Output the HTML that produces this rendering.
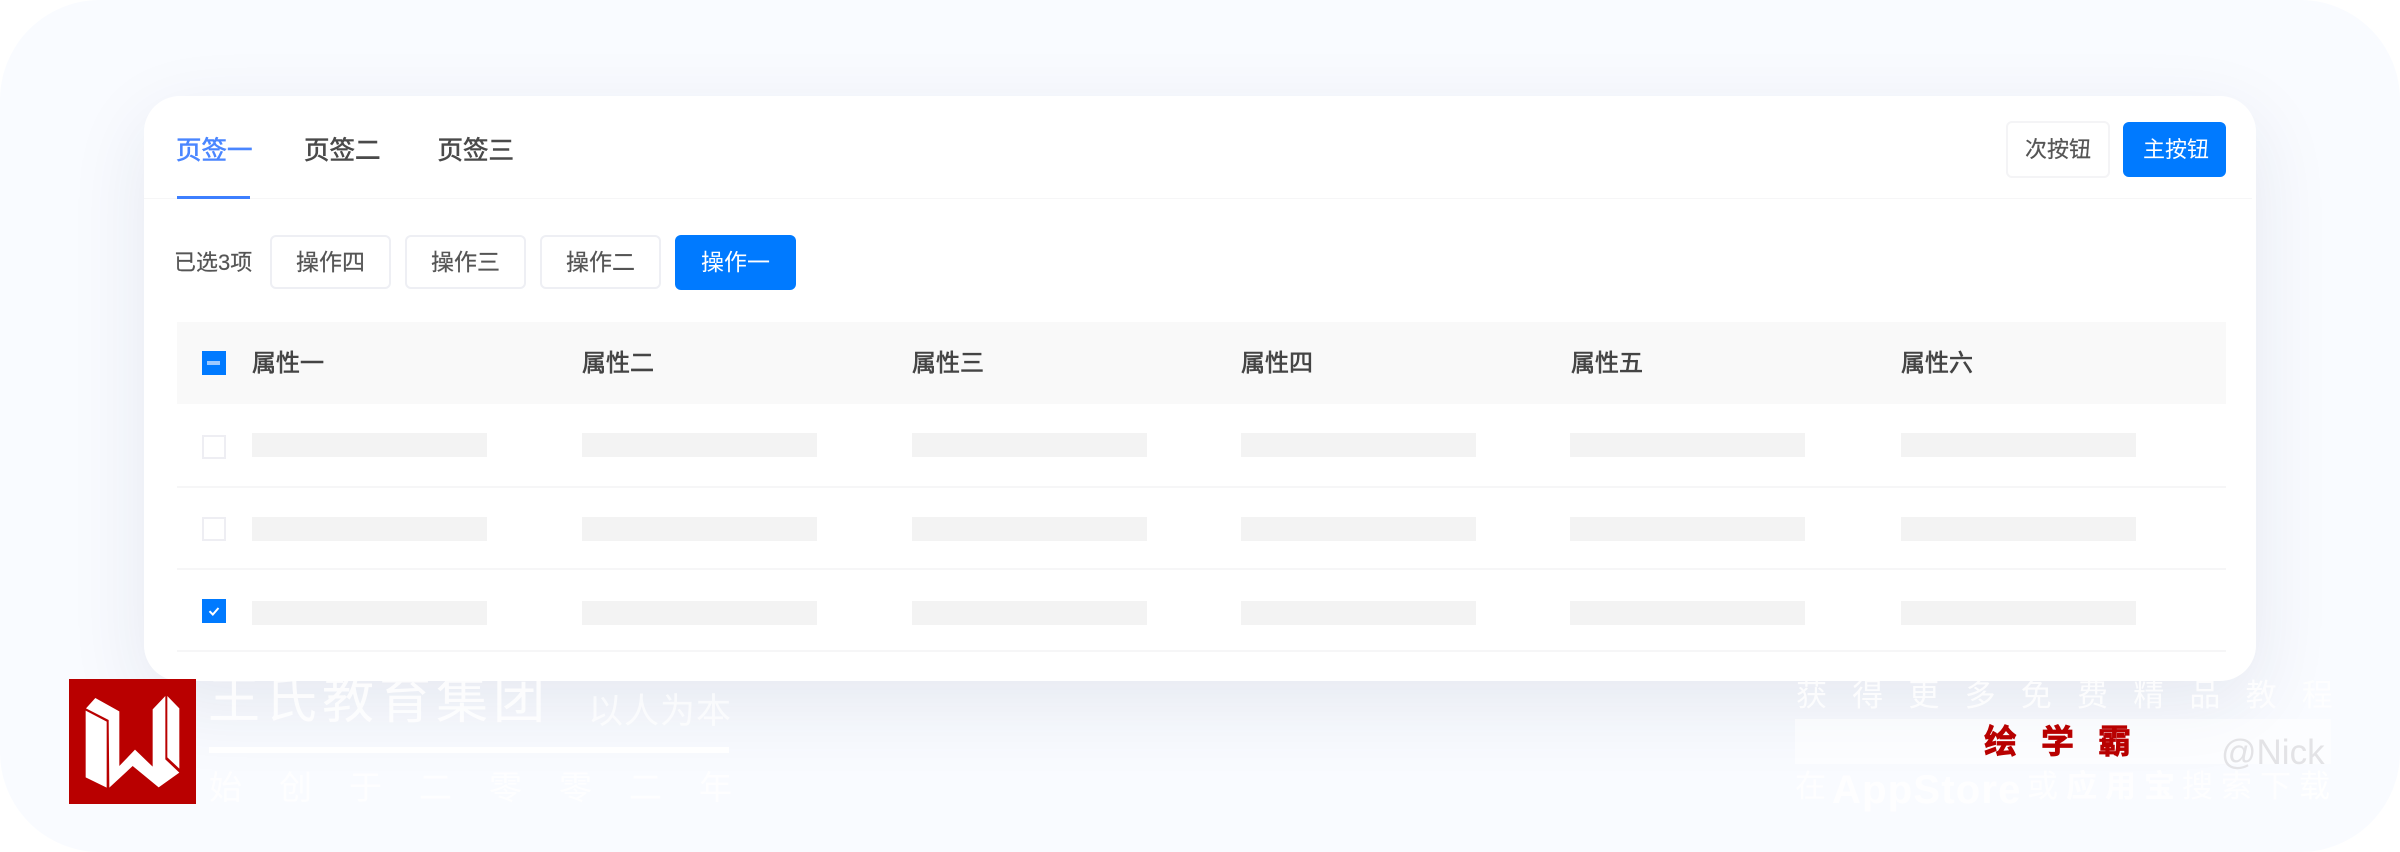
<!DOCTYPE html>
<html lang="zh">
<head>
<meta charset="utf-8">
<style>
html,body{margin:0;padding:0;background:#fff;width:2400px;height:852px;overflow:hidden}
body{font-family:"Liberation Sans","Noto Sans CJK SC",sans-serif}
#bg{position:absolute;left:0;top:0;width:2400px;height:852px;background:#f9fbff;border-radius:100px;overflow:hidden}
.a{position:absolute;white-space:nowrap;line-height:1}
#shadow{position:absolute;left:144px;top:96px;width:2112px;height:585px;border-radius:36px;box-shadow:0 24px 80px rgba(30,40,90,.09)}
#card{position:absolute;left:144px;top:96px;width:2112px;height:585px;background:#fff;border-radius:36px}
.b{position:absolute;box-sizing:border-box}
.btn{position:absolute;box-sizing:border-box;text-align:center;border-radius:6px}
.op{top:235px;width:121px;height:54px;border:2px solid #eeeff4;background:#fff;color:#555;font-size:23px;line-height:50px;-webkit-text-stroke:.2px #555}
.pri{background:#007aff;border:0;color:#fff;-webkit-text-stroke:0}
.sk{position:absolute;width:235px;height:24px;background:#f3f3f3}
.th{position:absolute;top:351px;font-size:24px;line-height:26px;color:#444;-webkit-text-stroke:.6px #444}
.ln{position:absolute;left:177px;width:2049px;height:2px;background:#f6f6f7}
.cb{position:absolute;left:202px;width:24px;height:24px;box-sizing:border-box;border:2px solid #eeeef3;background:#fff}
.cbb{border:0;background:#007aff}
.tab{position:absolute;top:138px;font-size:25.5px;line-height:26px;color:#4a4a4a;-webkit-text-stroke:.6px #4a4a4a}
.w{color:#fff}
</style>
</head>
<body>
<div id="bg">
  <div id="shadow"></div>

  <!-- watermark layer: above the shadow, below the card -->
  <div class="a w" style="left:208px;top:675px;font-size:52px;letter-spacing:5px;opacity:.85">王氏教育集团</div>
  <div class="a w" style="left:588px;top:694px;font-size:35px;letter-spacing:1px;opacity:.7">以人为本</div>
  <div class="b" style="left:209px;top:747px;width:520px;height:6px;background:#fff"></div>
  <div class="a w" style="left:209px;top:771px;font-size:33px;letter-spacing:37px;opacity:.85">始创于二零零二年</div>

  <div class="a w" style="left:1796px;top:680px;font-size:31px;letter-spacing:25.2px;opacity:.85">获得更多免费精品教程</div>
  <div class="b" style="left:1795px;top:719px;width:536px;height:45px;background:rgba(255,255,255,.5)"></div>
  <div class="a" style="left:1984px;top:725px;font-size:33px;letter-spacing:24px;font-weight:bold;color:#b80000;-webkit-text-stroke:.8px #b80000">绘学霸</div>
  <div class="a" style="left:2221px;top:735px;font-size:35px;color:#e3e3e6">@Nick</div>
  <div class="a w" style="left:1795px;top:771px;font-size:31px;opacity:.9">在</div>
  <div class="a w" style="left:1832px;top:770px;font-size:40px;font-weight:bold;letter-spacing:1.2px;opacity:.9">AppStore</div>
  <div class="a w" style="left:2027px;top:771px;font-size:31px;opacity:.9">或</div>
  <div class="a w" style="left:2066px;top:771px;font-size:31px;font-weight:bold;letter-spacing:8px;opacity:.95">应用宝</div>
  <div class="a w" style="left:2182px;top:771px;font-size:31px;letter-spacing:8px;opacity:.9">搜索下载</div>

  <div id="card"></div>

  <!-- logo -->
  <svg class="b" style="left:69px;top:679px" width="127" height="125" viewBox="27 27 381 375">
    <rect x="27" y="27" width="381" height="375" fill="#b90000"/>
    <polygon fill="#fff" points="78,115 106,84 178,124 178,288 225,239 278,290 278,118 316,78 316,268 358,308 296,352 218,288 148,353 146,150"/>
    <polygon fill="#fff" points="322,78 358,115 358,296 322,262"/>
    <polygon fill="#fff" points="77,122 140,155 140,353 77,322"/>
  </svg>

  <!-- tabs -->
  <div class="tab" style="left:176px;color:#4a86ff;-webkit-text-stroke:.6px #4a86ff">页签一</div>
  <div class="tab" style="left:304px">页签二</div>
  <div class="tab" style="left:437.5px">页签三</div>
  <div class="b" style="left:144px;top:198px;width:2108px;height:1px;background:#f6f6f7"></div>
  <div class="b" style="left:177px;top:196px;width:73px;height:3px;background:#3d7fff"></div>

  <div class="btn" style="left:2006px;top:121px;width:104px;height:57px;border:2px solid #f4f4f6;color:#555;font-size:22px;line-height:53px;background:#fff;-webkit-text-stroke:.2px #555">次按钮</div>
  <div class="btn pri" style="left:2123px;top:122px;width:103px;height:55px;font-size:22px;line-height:55px;padding-left:3px">主按钮</div>

  <div class="a" style="left:174px;top:252px;font-size:22px;line-height:22px;color:#555;-webkit-text-stroke:.2px #555">已选3项</div>
  <div class="btn op" style="left:270px">操作四</div>
  <div class="btn op" style="left:405px">操作三</div>
  <div class="btn op" style="left:540px">操作二</div>
  <div class="btn op pri" style="left:675px;line-height:54px;height:55px">操作一</div>

  <!-- table -->
  <div class="b" style="left:177px;top:322px;width:2049px;height:82px;background:#f9f9f9"></div>
  <div class="cb cbb" style="top:351px"></div>
  <div class="b" style="left:207px;top:361px;width:13px;height:4px;background:#9cc9ff"></div>
  <div class="th" style="left:252px">属性一</div>
  <div class="th" style="left:582px">属性二</div>
  <div class="th" style="left:912px">属性三</div>
  <div class="th" style="left:1241px">属性四</div>
  <div class="th" style="left:1571px">属性五</div>
  <div class="th" style="left:1901px">属性六</div>

  <div class="cb" style="top:435px"></div>
  <div class="cb" style="top:517px"></div>
  <div class="cb cbb" style="top:599px"></div>
  <svg class="b" style="left:202px;top:599px" width="24" height="24" viewBox="0 0 24 24"><path d="M7.5 12.2L10.8 15.5L16.5 9" fill="none" stroke="#fff" stroke-width="2"/></svg>

  <div class="sk" style="left:251.5px;top:433px"></div><div class="sk" style="left:582px;top:433px"></div><div class="sk" style="left:912px;top:433px"></div><div class="sk" style="left:1241px;top:433px"></div><div class="sk" style="left:1570px;top:433px"></div><div class="sk" style="left:1901px;top:433px"></div>
  <div class="sk" style="left:251.5px;top:517px"></div><div class="sk" style="left:582px;top:517px"></div><div class="sk" style="left:912px;top:517px"></div><div class="sk" style="left:1241px;top:517px"></div><div class="sk" style="left:1570px;top:517px"></div><div class="sk" style="left:1901px;top:517px"></div>
  <div class="sk" style="left:251.5px;top:601px"></div><div class="sk" style="left:582px;top:601px"></div><div class="sk" style="left:912px;top:601px"></div><div class="sk" style="left:1241px;top:601px"></div><div class="sk" style="left:1570px;top:601px"></div><div class="sk" style="left:1901px;top:601px"></div>

  <div class="ln" style="top:486px"></div>
  <div class="ln" style="top:568px"></div>
  <div class="ln" style="top:650px"></div>
</div>
</body>
</html>
